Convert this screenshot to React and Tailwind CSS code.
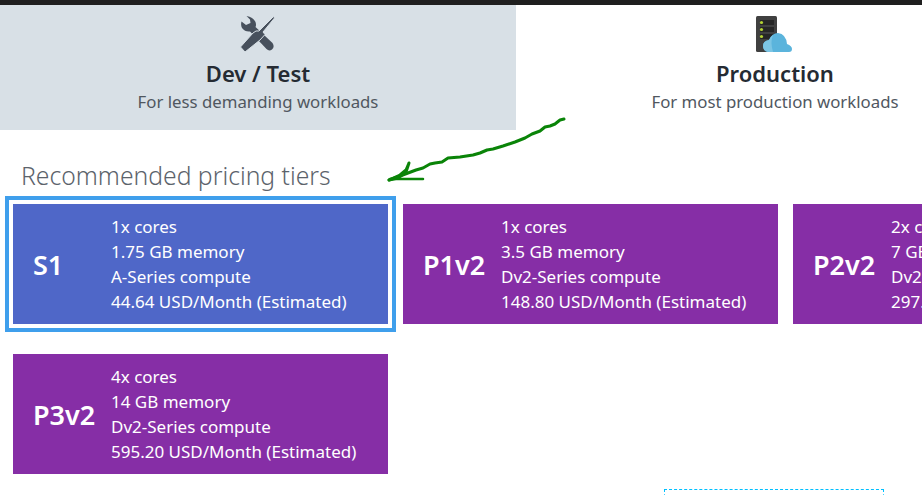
const font = { fontFamily: '"Noto Sans", "Open Sans", sans-serif' };

const tiers = [
  { name: "S1", lines: ["1x cores", "1.75 GB memory", "A-Series compute", "44.64 USD/Month (Estimated)"], selected: true },
  { name: "P1v2", lines: ["1x cores", "3.5 GB memory", "Dv2-Series compute", "148.80 USD/Month (Estimated)"] },
  { name: "P2v2", lines: ["2x cores", "7 GB memory", "Dv2-Series compute", "297.60 USD/Month (Estimated)"] },
  { name: "P3v2", lines: ["4x cores", "14 GB memory", "Dv2-Series compute", "595.20 USD/Month (Estimated)"] },
];

function ToolsIcon() {
  return (
    <svg width="36" height="36" viewBox="0 0 36 36" className="block">
      {/* wrench */}
      <path d="M6.500 0 Q13 1 15.500 6 Q16.500 9 15.500 11 L32.500 27 Q35 31 32 33.500 Q29 35.500 26.500 33 L10 15.500 Q5 16 2 12 Q0.500 9 1.500 5.500 L6 9 L10.500 7 L10 3.500 Z" fill="#47505c" />
      {/* screwdriver */}
      <path d="M33.500 0.500 L34.500 2 L23 16 L25 18.500 L20 24 L5 36 L0.500 31 L13 17 L16 15 L19 15 Z" fill="#47505c" stroke="#d8e0e6" strokeWidth="1" />
    </svg>
  );
}

function ServerIcon() {
  return (
    <svg width="36" height="36" viewBox="0 0 36 36" className="mr-[2px] block">
      <rect x="0" y="0" width="21" height="36" rx="1.500" fill="#404040" />
      <rect x="4" y="4" width="14" height="5" fill="#262626" />
      <rect x="4" y="11" width="14" height="5" fill="#262626" />
      <rect x="4" y="18" width="14" height="5" fill="#262626" />
      <circle cx="5.500" cy="6.500" r="1.600" fill="#b5d334" />
      <circle cx="5.500" cy="13.500" r="1.600" fill="#b5d334" />
      <circle cx="5.500" cy="20.500" r="1.600" fill="#b5d334" />
      <path d="M12 36 Q7 35 7 30 Q7 25 13 24 Q16 17 22 17 Q30 18 31 28 Q36 30 36 33 Q36 36 33 36 Z" fill="#5bb4dc" />
      <path d="M12 36 Q7 35 7 30 Q7 25 13 24 Q14 21 17 19 Q14 26 17 36 Z" fill="#7cc5e4" />
    </svg>
  );
}

function Tab({ icon, title, subtitle, active }) {
  return (
    <div className={`flex h-[125px] shrink-0 flex-col items-center pt-[11px] ${active ? "w-[516px] bg-[#d8e0e6]" : "w-[518px] bg-white"}`}>
      {icon}
      <div className="mt-[7px] text-[22px] leading-[28px] font-semibold text-[#252b33]">{title}</div>
      <div className="mt-[4px] text-[16.800px] leading-[22px] text-[#50575f]">{subtitle}</div>
    </div>
  );
}

function TierCard({ tier }) {
  return (
    <div className={`flex h-[120px] w-[375px] items-center text-white ${tier.selected ? "bg-[#4f67c8] outline-4 outline-offset-4 outline-[#3f9fec]" : "bg-[#862ea6]"}`}>
      <div className="w-[98px] shrink-0 pt-[2px] pl-[20px] text-[27px] font-semibold">{tier.name}</div>
      <div className="text-[17px] leading-[25px]">
        {tier.lines.map((line) => (
          <div key={line} className="whitespace-nowrap">{line}</div>
        ))}
      </div>
    </div>
  );
}

export default function App() {
  return (
    <div className="relative h-[495px] w-[922px] overflow-hidden bg-white" style={font}>
      <div className="h-[5px] bg-[#1f1f1f]" />
      <div className="flex">
        <Tab icon={<ToolsIcon />} title="Dev / Test" subtitle="For less demanding workloads" active />
        <Tab icon={<ServerIcon />} title="Production" subtitle="For most production workloads" />
      </div>
      <h2 className="mt-[29px] pl-[21px] text-[24.700px] leading-[34px] font-light text-[#5c636b]">Recommended pricing tiers</h2>
      <div className="mt-[11px] grid w-[1155px] grid-cols-[375px_375px_375px] gap-x-[15px] gap-y-[30px] pl-[13px]">
        {tiers.map((tier) => (
          <TierCard key={tier.name} tier={tier} />
        ))}
      </div>
      <div className="mt-[15px] ml-[664px] h-[40px] w-[220px] border border-dashed border-[#00bfff]" />
      {/* hand drawn arrow */}
      <svg className="absolute top-[110px] left-[380px]" width="195" height="80" viewBox="0 0 195 80" fill="none" stroke="#0a8408" strokeLinecap="round" strokeLinejoin="round">
        <path strokeWidth="3" d="M184 9 L180 10 L175 14 L170 16 L165 17 L160 21 L152 24 L145 28 L135 32 L123 36 L113 39 L107 40 L100 43 L93 45 L80 47 L68 48 L62 52 L55 53 L50 54 L43 58 L36 60 L28 63 L20 66 L9 70" />
        <path strokeWidth="2.500" d="M10 69 L43 69" />
        <path strokeWidth="3" d="M9 70 L20 65 L26 60 L29 53 L26 62 L18 68 Z" fill="#0a8408" />
      </svg>
    </div>
  );
}
